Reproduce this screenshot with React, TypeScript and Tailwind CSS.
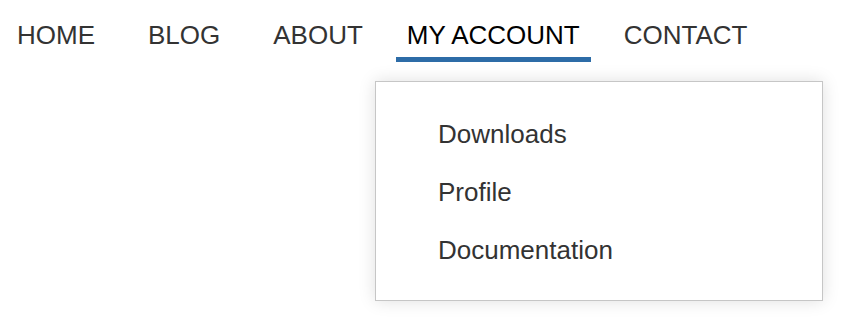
import React from 'react';

const NAV_ITEMS = ['HOME', 'BLOG', 'ABOUT', 'MY ACCOUNT', 'CONTACT'];
const MENU_ITEMS = ['Downloads', 'Profile', 'Documentation'];

const App = () => {
  return (
    <div className="relative w-[853px] h-[328px] bg-white font-['Liberation_Sans',Arial,sans-serif]">
      <ul className="flex pl-[6px] pt-[20px]">
        {NAV_ITEMS.map((item, i) => {
          const active = item === 'MY ACCOUNT';
          return (
            <li
              key={item}
              className={`px-[11px] pb-[6px] text-[26px] leading-[31px] whitespace-nowrap border-b-[5px] ${
                active ? 'text-black border-[#2d6ca7]' : 'text-[#333333] border-transparent'
              } ${i === 1 || i === 2 ? 'ml-[31px]' : i > 2 ? 'ml-[22px]' : ''}`}
            >
              {item}
            </li>
          );
        })}
      </ul>

      {/* dropdown under MY ACCOUNT */}
      <div className="absolute left-[375px] top-[81px] w-[448px] h-[220px] bg-white border border-[#c6c6c6] shadow-[0_0_16px_rgba(0,0,0,0.13)] pt-[23px]">
        {MENU_ITEMS.map((item) => (
          <div key={item} className="pl-[62px] py-[14px] text-[26px] leading-[30px] text-[#333333]">
            {item}
          </div>
        ))}
      </div>
    </div>
  );
};

export default App;
